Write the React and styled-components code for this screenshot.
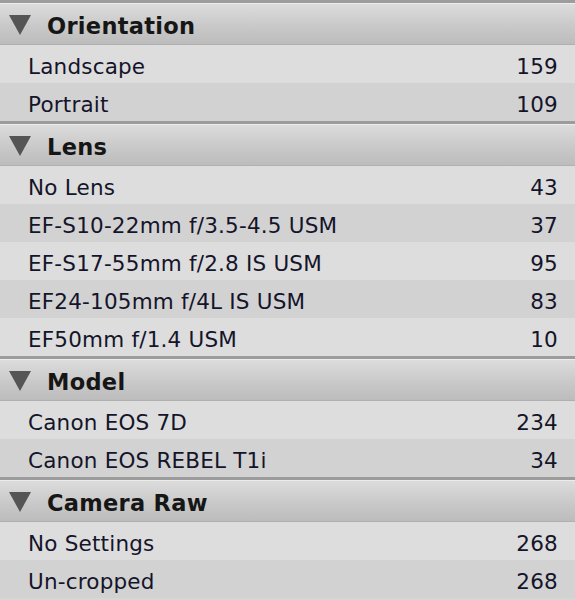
import React from 'react'
import styled, { createGlobalStyle } from 'styled-components'

const GlobalStyle = createGlobalStyle`
  html, body {
    margin: 0;
    padding: 0;
    background: #d6d6d6;
  }
`

const Panel = styled.div`
  width: 575px;
  display: flex;
  flex-direction: column;
  font-family: "DejaVu Sans", Verdana, sans-serif;
  overflow: hidden;
`

const Section = styled.div`
  display: flex;
  flex-direction: column;
  border-top: 3px solid #9c9c9c;
`

const Header = styled.div`
  height: 40px;
  display: flex;
  align-items: center;
  border-top: 1px solid #ececec;
  border-bottom: 1px solid #b0b0b0;
  background: linear-gradient(#dcdcdc, #c9c9c9 55%, #bcbcbc);
  box-sizing: content-box;
`

const Arrow = styled.span`
  width: 0;
  height: 0;
  margin: 2px 16px 0 9px;
  border-left: 11px solid transparent;
  border-right: 11px solid transparent;
  border-top: 20px solid #555;
`

const Title = styled.span`
  font-weight: bold;
  font-size: 22.5px;
  color: #161616;
  letter-spacing: 0.3px;
  padding-top: 4px;
`

const Row = styled.div`
  height: 38px;
  display: flex;
  align-items: center;
  justify-content: space-between;
  padding: 5px 17px 0 28px;
  box-sizing: border-box;
  font-size: 21.5px;
  letter-spacing: 0.2px;
  color: #14142a;
  background: ${({ odd }) => (odd ? '#d2d2d2' : '#dddddd')};
`

const Count = styled.span`
  text-align: right;
`

const groups = [
  { title: 'Orientation', items: [['Landscape', 159], ['Portrait', 109]] },
  {
    title: 'Lens',
    items: [
      ['No Lens', 43],
      ['EF-S10-22mm f/3.5-4.5 USM', 37],
      ['EF-S17-55mm f/2.8 IS USM', 95],
      ['EF24-105mm f/4L IS USM', 83],
      ['EF50mm f/1.4 USM', 10],
    ],
  },
  { title: 'Model', items: [['Canon EOS 7D', 234], ['Canon EOS REBEL T1i', 34]] },
  { title: 'Camera Raw', items: [['No Settings', 268], ['Un-cropped', 268]] },
]

export default function App() {
  return (
    <>
      <GlobalStyle />
      <Panel>
        {groups.map((g) => (
          <Section key={g.title}>
            <Header>
              <Arrow />
              <Title>{g.title}</Title>
            </Header>
            {g.items.map(([label, n], i) => (
              <Row key={label} odd={i % 2 === 1}>
                <span>{label}</span>
                <Count>{n}</Count>
              </Row>
            ))}
          </Section>
        ))}
      </Panel>
    </>
  )
}
